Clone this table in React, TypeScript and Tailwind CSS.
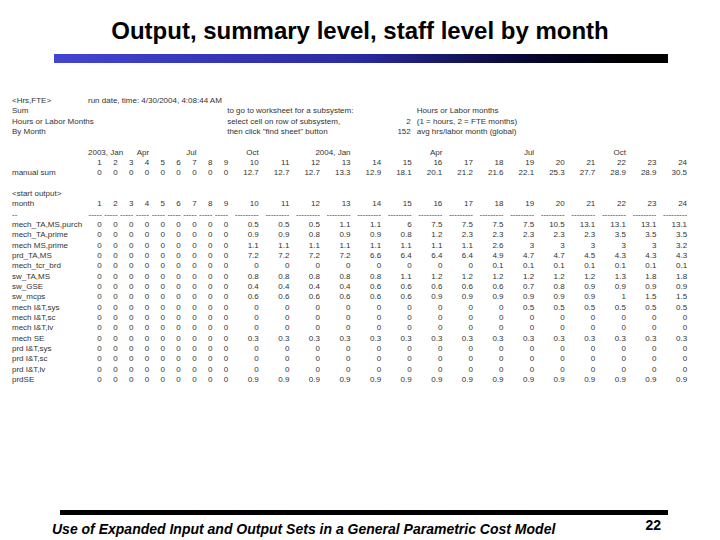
import type { ReactNode } from "react"

const months = Array.from({ length: 24 }, (_, i) => String(i + 1))
const zeros9 = Array.from({ length: 9 }, () => "0")
const same = (v: string) => Array.from({ length: 15 }, () => v)

const manualSum = [...zeros9, "12.7", "12.7", "12.7", "13.3", "12.9", "18.1", "20.1", "21.2", "21.6", "22.1", "25.3", "27.7", "28.9", "28.9", "30.5"]

const output: { label: string; vals: string[] }[] = [
  { label: "mech_TA,MS,purch", vals: ["0.5", "0.5", "0.5", "1.1", "1.1", "6", "7.5", "7.5", "7.5", "7.5", "10.5", "13.1", "13.1", "13.1", "13.1"] },
  { label: "mech_TA,prime", vals: ["0.9", "0.9", "0.8", "0.9", "0.9", "0.8", "1.2", "2.3", "2.3", "2.3", "2.3", "2.3", "3.5", "3.5", "3.5"] },
  { label: "mech MS,prime", vals: ["1.1", "1.1", "1.1", "1.1", "1.1", "1.1", "1.1", "1.1", "2.6", "3", "3", "3", "3", "3", "3.2"] },
  { label: "prd_TA,MS", vals: ["7.2", "7.2", "7.2", "7.2", "6.6", "6.4", "6.4", "6.4", "4.9", "4.7", "4.7", "4.5", "4.3", "4.3", "4.3"] },
  { label: "mech_tcr_brd", vals: ["0", "0", "0", "0", "0", "0", "0", "0", "0.1", "0.1", "0.1", "0.1", "0.1", "0.1", "0.1"] },
  { label: "sw_TA,MS", vals: ["0.8", "0.8", "0.8", "0.8", "0.8", "1.1", "1.2", "1.2", "1.2", "1.2", "1.2", "1.2", "1.3", "1.8", "1.8"] },
  { label: "sw_GSE", vals: ["0.4", "0.4", "0.4", "0.4", "0.6", "0.6", "0.6", "0.6", "0.6", "0.7", "0.8", "0.9", "0.9", "0.9", "0.9"] },
  { label: "sw_mcps", vals: ["0.6", "0.6", "0.6", "0.6", "0.6", "0.6", "0.9", "0.9", "0.9", "0.9", "0.9", "0.9", "1", "1.5", "1.5"] },
  { label: "mech I&T,sys", vals: ["0", "0", "0", "0", "0", "0", "0", "0", "0", "0.5", "0.5", "0.5", "0.5", "0.5", "0.5"] },
  { label: "mech I&T,sc", vals: same("0") },
  { label: "mech I&T,lv", vals: same("0") },
  { label: "mech SE", vals: same("0.3") },
  { label: "prd I&T,sys", vals: same("0") },
  { label: "prd I&T,sc", vals: same("0") },
  { label: "prd I&T,lv", vals: same("0") },
  { label: "prdSE", vals: same("0.9") },
]

// label column, months 1-9 (narrow), months 10-24 (wide)
const grid = "grid h-[10.33px] grid-cols-[88px_repeat(9,15.8px)_repeat(15,30.6px)] leading-[10.33px]"

function Row({ label, cells }: { label?: ReactNode; cells: ReactNode[] }) {
  return (
    <div className={grid}>
      <div className="whitespace-nowrap pl-[12px]">{label}</div>
      {cells.map((c, i) => (
        <div key={i} className="flex justify-end whitespace-nowrap pr-[2px]">
          {c}
        </div>
      ))}
    </div>
  )
}

function TextRow({ children }: { children: ReactNode }) {
  return <div className={grid}>{children}</div>
}

function Right({ col, children }: { col: string; children: ReactNode }) {
  return <div className={`${col} flex justify-end whitespace-nowrap pr-[2px]`}>{children}</div>
}

export default function App() {
  return (
    <div className="relative flex h-[540px] w-[720px] flex-col overflow-hidden bg-white font-['Liberation_Sans',Arial,sans-serif] text-black">
      {/* title */}
      <h1 className="pt-[17px] text-center text-[24px] font-bold leading-[28px]">
        Output, summary level, staff level by month
      </h1>
      <div className="ml-[54px] mt-[9px] h-[9px] w-[614px] bg-linear-to-r from-[#4444d2] via-[#2a2aa0] to-black" />

      {/* spreadsheet dump */}
      <div className="mt-[33px] text-[8px] text-[#333]">
        <TextRow>
          <div className="whitespace-nowrap pl-[12px]">&lt;Hrs,FTE&gt;</div>
          <div className="col-span-9 col-start-2 whitespace-nowrap">run date, time: 4/30/2004, 4:08:44 AM</div>
        </TextRow>
        <TextRow>
          <div className="whitespace-nowrap pl-[12px]">Sum</div>
          <div className="col-span-5 col-start-11 -ml-[3px] whitespace-nowrap">to go to worksheet for a subsystem:</div>
          <div className="col-span-9 col-start-17 whitespace-nowrap pl-[3px]">Hours or Labor months</div>
        </TextRow>
        <TextRow>
          <div className="whitespace-nowrap pl-[12px]">Hours or Labor Months</div>
          <div className="col-span-5 col-start-11 -ml-[3px] whitespace-nowrap">select cell on row of subsystem,</div>
          <div className="col-start-16 flex justify-end pr-[3px]">2</div>
          <div className="col-span-9 col-start-17 whitespace-nowrap pl-[3px]">(1 = hours, 2 = FTE months)</div>
        </TextRow>
        <TextRow>
          <div className="whitespace-nowrap pl-[12px]">By Month</div>
          <div className="col-span-5 col-start-11 -ml-[3px] whitespace-nowrap">then click "find sheet" button</div>
          <div className="col-start-16 flex justify-end pr-[3px]">152</div>
          <div className="col-span-9 col-start-17 whitespace-nowrap pl-[3px]">avg hrs/labor month (global)</div>
        </TextRow>
        <Row cells={[]} />
        <TextRow>
          <div className="col-span-3 col-start-2 whitespace-nowrap">2003, Jan</div>
          <Right col="col-start-5">Apr</Right>
          <Right col="col-start-8">Jul</Right>
          <Right col="col-start-11">Oct</Right>
          <Right col="col-start-14">2004, Jan</Right>
          <Right col="col-start-17">Apr</Right>
          <Right col="col-start-20">Jul</Right>
          <Right col="col-start-23">Oct</Right>
        </TextRow>
        <Row cells={months} />
        <Row label="manual sum" cells={manualSum} />
        <Row cells={[]} />
        <Row label="<start output>" cells={[]} />
        <Row label="month" cells={months} />
        <Row
          label="--"
          cells={months.map((_, i) => (
            <span key={i} className="overflow-hidden">
              {i < 9 ? "-----" : "---------"}
            </span>
          ))}
        />
        {output.map((r) => (
          <Row key={r.label} label={r.label} cells={[...zeros9, ...r.vals]} />
        ))}
      </div>

      {/* footer */}
      <div className="mt-auto pb-[3px]">
        <div className="ml-[60px] h-[5px] w-[608px] bg-black" />
        <div className="mt-[6px] flex items-start justify-between pl-[52px] pr-[59px]">
          <span className="text-[14px] font-bold italic leading-[16px]">
            Use of Expanded Input and Output Sets in a General Parametric Cost Model
          </span>
          <span className="-mt-[4px] text-[14px] font-bold leading-[16px]">22</span>
        </div>
      </div>
    </div>
  )
}
